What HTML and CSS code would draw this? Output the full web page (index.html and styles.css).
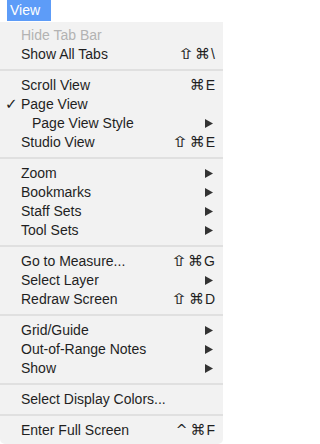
FILE: index.html
```html
<!DOCTYPE html>
<html>
<head>
<meta charset="utf-8">
<link rel="stylesheet" href="styles.css">
</head>
<body>
<div class="menubar"><span class="title">View</span></div>
<div class="menu">
  <div class="item disabled"><span class="check"></span><span class="label">Hide Tab Bar</span></div>
  <div class="item"><span class="check"></span><span class="label">Show All Tabs</span><span class="key"><span class="mod shift">⇧</span><span class="mod">⌘</span>\</span></div>
  <div class="sep"></div>
  <div class="item"><span class="check"></span><span class="label">Scroll View</span><span class="key"><span class="mod">⌘</span>E</span></div>
  <div class="item"><span class="check">✓</span><span class="label">Page View</span></div>
  <div class="item"><span class="check"></span><span class="label indent">Page View Style</span><span class="arrow"><svg width="8" height="9" viewBox="0 0 8 9"><path d="M0 0L8 4.5L0 9Z"/></svg></span></div>
  <div class="item"><span class="check"></span><span class="label">Studio View</span><span class="key"><span class="mod shift">⇧</span><span class="mod">⌘</span>E</span></div>
  <div class="sep"></div>
  <div class="item"><span class="check"></span><span class="label">Zoom</span><span class="arrow"><svg width="8" height="9" viewBox="0 0 8 9"><path d="M0 0L8 4.5L0 9Z"/></svg></span></div>
  <div class="item"><span class="check"></span><span class="label">Bookmarks</span><span class="arrow"><svg width="8" height="9" viewBox="0 0 8 9"><path d="M0 0L8 4.5L0 9Z"/></svg></span></div>
  <div class="item"><span class="check"></span><span class="label">Staff Sets</span><span class="arrow"><svg width="8" height="9" viewBox="0 0 8 9"><path d="M0 0L8 4.5L0 9Z"/></svg></span></div>
  <div class="item"><span class="check"></span><span class="label">Tool Sets</span><span class="arrow"><svg width="8" height="9" viewBox="0 0 8 9"><path d="M0 0L8 4.5L0 9Z"/></svg></span></div>
  <div class="sep"></div>
  <div class="item"><span class="check"></span><span class="label">Go to Measure...</span><span class="key"><span class="mod shift">⇧</span><span class="mod">⌘</span>G</span></div>
  <div class="item"><span class="check"></span><span class="label">Select Layer</span><span class="arrow"><svg width="8" height="9" viewBox="0 0 8 9"><path d="M0 0L8 4.5L0 9Z"/></svg></span></div>
  <div class="item"><span class="check"></span><span class="label">Redraw Screen</span><span class="key"><span class="mod shift">⇧</span><span class="mod">⌘</span>D</span></div>
  <div class="sep"></div>
  <div class="item"><span class="check"></span><span class="label">Grid/Guide</span><span class="arrow"><svg width="8" height="9" viewBox="0 0 8 9"><path d="M0 0L8 4.5L0 9Z"/></svg></span></div>
  <div class="item"><span class="check"></span><span class="label">Out-of-Range Notes</span><span class="arrow"><svg width="8" height="9" viewBox="0 0 8 9"><path d="M0 0L8 4.5L0 9Z"/></svg></span></div>
  <div class="item"><span class="check"></span><span class="label">Show</span><span class="arrow"><svg width="8" height="9" viewBox="0 0 8 9"><path d="M0 0L8 4.5L0 9Z"/></svg></span></div>
  <div class="sep"></div>
  <div class="item"><span class="check"></span><span class="label">Select Display Colors...</span></div>
  <div class="sep"></div>
  <div class="item"><span class="check"></span><span class="label">Enter Full Screen</span><span class="key"><span class="mod caret">^</span><span class="mod">⌘</span>F</span></div>
</div>
</body>
</html>
```
FILE: styles.css
```css
html, body {
  margin: 0;
  padding: 0;
  background: #ffffff;
}
body {
  font-family: "Liberation Sans", Arial, sans-serif;
  font-size: 14px;
  color: #1f1f1f;
  width: 226px;
  height: 444px;
  overflow: hidden;
}
.menubar {
  height: 22px;
  display: flex;
  align-items: flex-start;
  padding-left: 7px;
}
.title {
  display: block;
  height: 21px;
  line-height: 21px;
  padding: 0 11px 0 3px;
  background: #5d9cf8;
  color: #ffffff;
  font-size: 14px;
}
.menu {
  width: 223px;
  background: #f2f2f2;
  border-radius: 0 0 5px 5px;
  padding: 4px 0 4px 0;
}
.item {
  height: 19px;
  display: flex;
  align-items: center;
  line-height: 19px;
  white-space: nowrap;
}
.check {
  width: 21px;
  flex: none;
  padding-left: 5px;
  box-sizing: border-box;
  font-family: "DejaVu Sans", sans-serif;
  font-size: 15px;
  color: #1f1f1f;
}
.label {
  flex: 1;
}
.label.indent {
  padding-left: 11px;
}
.disabled {
  color: #b3b3b3;
}
.key {
  display: flex;
  align-items: center;
  gap: 1px;
  padding-right: 8px;
  font-size: 14px;
  color: #1f1f1f;
}
.mod {
  font-family: "DejaVu Sans", sans-serif;
  font-size: 15px;
}
.mod.shift {
  display: inline-block;
  transform: scaleX(1.45);
  margin: 0 2px 0 2px;
}
.mod.caret {
  font-size: 14px;
  padding-right: 2px;
}
.arrow {
  display: flex;
  align-items: center;
  padding-right: 10px;
}
.arrow svg {
  fill: #333333;
}
.sep {
  height: 12px;
  display: flex;
  align-items: center;
}
.sep::after {
  content: "";
  display: block;
  width: 100%;
  height: 2px;
  background: #e0e0e0;
}
```
